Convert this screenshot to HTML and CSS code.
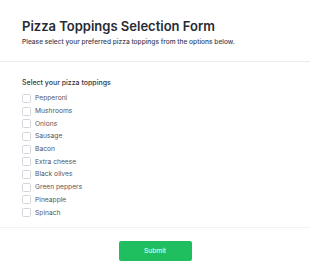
FILE: index.html
```html
<!DOCTYPE html>
<html lang="en">
<head>
  <meta charset="UTF-8" />
  <meta name="viewport" content="width=device-width, initial-scale=1.0"/>
  <title>Pizza Toppings Selection Form</title>
  <link rel="stylesheet" href="styles.css">
</head>
<body>
  <form class="form">
    <div class="header">
      <h1 class="title">Pizza Toppings Selection Form</h1>
      <p class="subtitle">Please select your preferred pizza toppings from the options below.</p>
    </div>

    <div class="body">
      <div class="group-label">Select your pizza toppings</div>
      <label class="option"><input type="checkbox"><span>Pepperoni</span></label>
      <label class="option"><input type="checkbox"><span>Mushrooms</span></label>
      <label class="option"><input type="checkbox"><span>Onions</span></label>
      <label class="option"><input type="checkbox"><span>Sausage</span></label>
      <label class="option"><input type="checkbox"><span>Bacon</span></label>
      <label class="option"><input type="checkbox"><span>Extra cheese</span></label>
      <label class="option"><input type="checkbox"><span>Black olives</span></label>
      <label class="option"><input type="checkbox"><span>Green peppers</span></label>
      <label class="option"><input type="checkbox"><span>Pineapple</span></label>
      <label class="option"><input type="checkbox"><span>Spinach</span></label>
    </div>

    <div class="footer">
      <button type="submit" class="submit">Submit</button>
    </div>
  </form>
</body>
</html>
```

FILE: styles.css
```css
body {
  margin: 0;
  background: #fff;
  font-family: Inter, "Noto Sans", sans-serif;
  color: #1f2937;
}

.form {
  width: 310px;
}

.header {
  padding: 17px 22px 0;
  height: 44px;
  border-bottom: 1px solid #ececec;
}

.title {
  margin: 0;
  font-size: 13px;
  line-height: 18px;
  font-weight: 600;
  color: #272a33;
}

.subtitle {
  margin: 3px 0 0;
  font-size: 6.6px;
  line-height: 9px;
  font-weight: 500;
  color: #3a4154;
}

.body {
  padding: 16px 22px 0;
  height: 149px;
  border-bottom: 1px solid #f2f2f2;
}

.group-label {
  font-size: 7px;
  line-height: 9px;
  font-weight: 500;
  color: #333740;
  margin-bottom: 5px;
}

.option {
  display: flex;
  align-items: center;
  gap: 4px;
  height: 12.7px;
  font-size: 6.7px;
  color: #55565e;
}

.option input {
  appearance: none;
  margin: 0;
  width: 9px;
  height: 9px;
  border: 1px solid #d4d6db;
  border-radius: 1.5px;
  background: #fff;
}

.footer {
  display: flex;
  justify-content: center;
  padding-top: 13px;
}

.submit {
  width: 73px;
  height: 20px;
  border: none;
  border-radius: 2px;
  background: #1fbf5f;
  color: #fff;
  font-family: Inter, sans-serif;
  font-size: 6.7px;
  font-weight: 400;
}
```
